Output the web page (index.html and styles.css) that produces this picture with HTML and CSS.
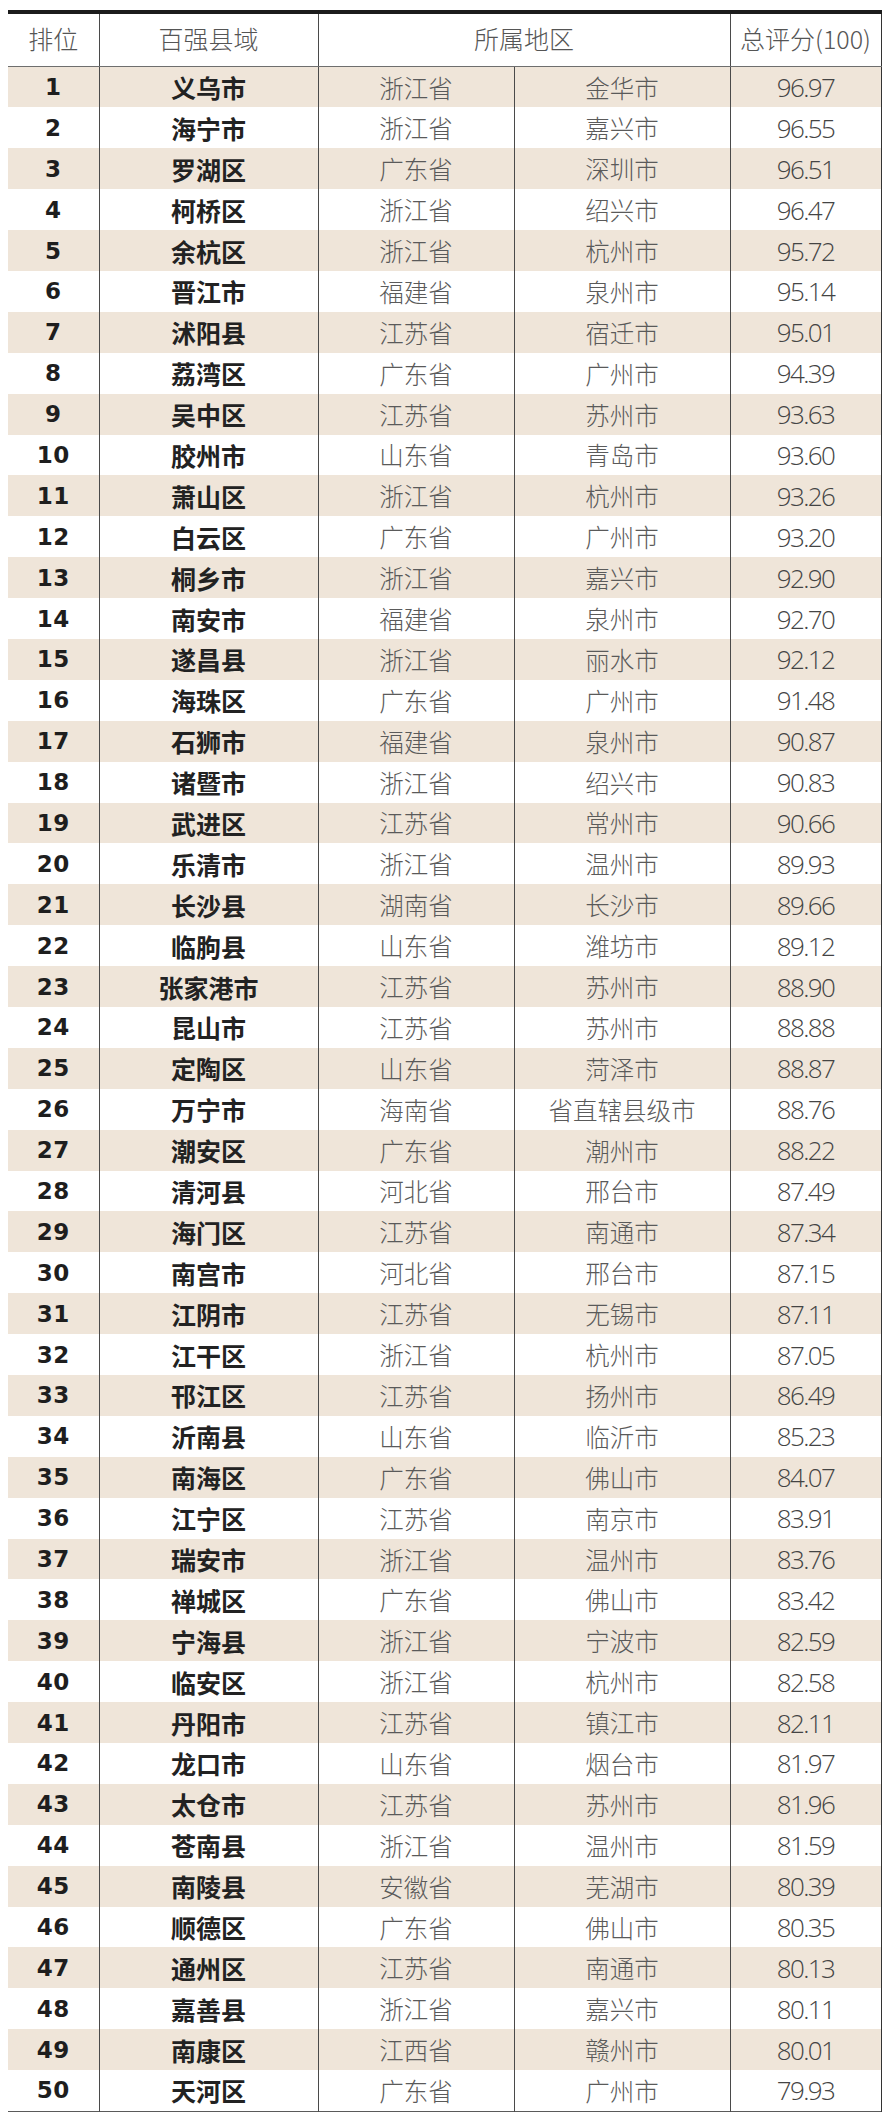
FILE: index.html
```html
<!DOCTYPE html>
<html lang="zh-CN">
<head>
<meta charset="utf-8">
<title>百强县域</title>
<link rel="stylesheet" href="styles.css">
</head>
<body>
<table class="rank">
<colgroup>
<col class="c-rank"><col class="c-name"><col class="c-prov"><col class="c-city"><col class="c-score">
</colgroup>
<thead>
<tr class="head"><th>排位</th><th>百强县域</th><th colspan="2">所属地区</th><th class="last">总评分(100)</th></tr>
</thead>
<tbody id="rows">
<tr><td class="n">1</td><td class="nm">义乌市</td><td class="pv">浙江省</td><td class="ct">金华市</td><td class="sc">96.97</td></tr>
<tr><td class="n">2</td><td class="nm">海宁市</td><td class="pv">浙江省</td><td class="ct">嘉兴市</td><td class="sc">96.55</td></tr>
<tr><td class="n">3</td><td class="nm">罗湖区</td><td class="pv">广东省</td><td class="ct">深圳市</td><td class="sc">96.51</td></tr>
<tr><td class="n">4</td><td class="nm">柯桥区</td><td class="pv">浙江省</td><td class="ct">绍兴市</td><td class="sc">96.47</td></tr>
<tr><td class="n">5</td><td class="nm">余杭区</td><td class="pv">浙江省</td><td class="ct">杭州市</td><td class="sc">95.72</td></tr>
<tr><td class="n">6</td><td class="nm">晋江市</td><td class="pv">福建省</td><td class="ct">泉州市</td><td class="sc">95.14</td></tr>
<tr><td class="n">7</td><td class="nm">沭阳县</td><td class="pv">江苏省</td><td class="ct">宿迁市</td><td class="sc">95.01</td></tr>
<tr><td class="n">8</td><td class="nm">荔湾区</td><td class="pv">广东省</td><td class="ct">广州市</td><td class="sc">94.39</td></tr>
<tr><td class="n">9</td><td class="nm">吴中区</td><td class="pv">江苏省</td><td class="ct">苏州市</td><td class="sc">93.63</td></tr>
<tr><td class="n">10</td><td class="nm">胶州市</td><td class="pv">山东省</td><td class="ct">青岛市</td><td class="sc">93.60</td></tr>
<tr><td class="n">11</td><td class="nm">萧山区</td><td class="pv">浙江省</td><td class="ct">杭州市</td><td class="sc">93.26</td></tr>
<tr><td class="n">12</td><td class="nm">白云区</td><td class="pv">广东省</td><td class="ct">广州市</td><td class="sc">93.20</td></tr>
<tr><td class="n">13</td><td class="nm">桐乡市</td><td class="pv">浙江省</td><td class="ct">嘉兴市</td><td class="sc">92.90</td></tr>
<tr><td class="n">14</td><td class="nm">南安市</td><td class="pv">福建省</td><td class="ct">泉州市</td><td class="sc">92.70</td></tr>
<tr><td class="n">15</td><td class="nm">遂昌县</td><td class="pv">浙江省</td><td class="ct">丽水市</td><td class="sc">92.12</td></tr>
<tr><td class="n">16</td><td class="nm">海珠区</td><td class="pv">广东省</td><td class="ct">广州市</td><td class="sc">91.48</td></tr>
<tr><td class="n">17</td><td class="nm">石狮市</td><td class="pv">福建省</td><td class="ct">泉州市</td><td class="sc">90.87</td></tr>
<tr><td class="n">18</td><td class="nm">诸暨市</td><td class="pv">浙江省</td><td class="ct">绍兴市</td><td class="sc">90.83</td></tr>
<tr><td class="n">19</td><td class="nm">武进区</td><td class="pv">江苏省</td><td class="ct">常州市</td><td class="sc">90.66</td></tr>
<tr><td class="n">20</td><td class="nm">乐清市</td><td class="pv">浙江省</td><td class="ct">温州市</td><td class="sc">89.93</td></tr>
<tr><td class="n">21</td><td class="nm">长沙县</td><td class="pv">湖南省</td><td class="ct">长沙市</td><td class="sc">89.66</td></tr>
<tr><td class="n">22</td><td class="nm">临朐县</td><td class="pv">山东省</td><td class="ct">潍坊市</td><td class="sc">89.12</td></tr>
<tr><td class="n">23</td><td class="nm">张家港市</td><td class="pv">江苏省</td><td class="ct">苏州市</td><td class="sc">88.90</td></tr>
<tr><td class="n">24</td><td class="nm">昆山市</td><td class="pv">江苏省</td><td class="ct">苏州市</td><td class="sc">88.88</td></tr>
<tr><td class="n">25</td><td class="nm">定陶区</td><td class="pv">山东省</td><td class="ct">菏泽市</td><td class="sc">88.87</td></tr>
<tr><td class="n">26</td><td class="nm">万宁市</td><td class="pv">海南省</td><td class="ct">省直辖县级市</td><td class="sc">88.76</td></tr>
<tr><td class="n">27</td><td class="nm">潮安区</td><td class="pv">广东省</td><td class="ct">潮州市</td><td class="sc">88.22</td></tr>
<tr><td class="n">28</td><td class="nm">清河县</td><td class="pv">河北省</td><td class="ct">邢台市</td><td class="sc">87.49</td></tr>
<tr><td class="n">29</td><td class="nm">海门区</td><td class="pv">江苏省</td><td class="ct">南通市</td><td class="sc">87.34</td></tr>
<tr><td class="n">30</td><td class="nm">南宫市</td><td class="pv">河北省</td><td class="ct">邢台市</td><td class="sc">87.15</td></tr>
<tr><td class="n">31</td><td class="nm">江阴市</td><td class="pv">江苏省</td><td class="ct">无锡市</td><td class="sc">87.11</td></tr>
<tr><td class="n">32</td><td class="nm">江干区</td><td class="pv">浙江省</td><td class="ct">杭州市</td><td class="sc">87.05</td></tr>
<tr><td class="n">33</td><td class="nm">邗江区</td><td class="pv">江苏省</td><td class="ct">扬州市</td><td class="sc">86.49</td></tr>
<tr><td class="n">34</td><td class="nm">沂南县</td><td class="pv">山东省</td><td class="ct">临沂市</td><td class="sc">85.23</td></tr>
<tr><td class="n">35</td><td class="nm">南海区</td><td class="pv">广东省</td><td class="ct">佛山市</td><td class="sc">84.07</td></tr>
<tr><td class="n">36</td><td class="nm">江宁区</td><td class="pv">江苏省</td><td class="ct">南京市</td><td class="sc">83.91</td></tr>
<tr><td class="n">37</td><td class="nm">瑞安市</td><td class="pv">浙江省</td><td class="ct">温州市</td><td class="sc">83.76</td></tr>
<tr><td class="n">38</td><td class="nm">禅城区</td><td class="pv">广东省</td><td class="ct">佛山市</td><td class="sc">83.42</td></tr>
<tr><td class="n">39</td><td class="nm">宁海县</td><td class="pv">浙江省</td><td class="ct">宁波市</td><td class="sc">82.59</td></tr>
<tr><td class="n">40</td><td class="nm">临安区</td><td class="pv">浙江省</td><td class="ct">杭州市</td><td class="sc">82.58</td></tr>
<tr><td class="n">41</td><td class="nm">丹阳市</td><td class="pv">江苏省</td><td class="ct">镇江市</td><td class="sc">82.11</td></tr>
<tr><td class="n">42</td><td class="nm">龙口市</td><td class="pv">山东省</td><td class="ct">烟台市</td><td class="sc">81.97</td></tr>
<tr><td class="n">43</td><td class="nm">太仓市</td><td class="pv">江苏省</td><td class="ct">苏州市</td><td class="sc">81.96</td></tr>
<tr><td class="n">44</td><td class="nm">苍南县</td><td class="pv">浙江省</td><td class="ct">温州市</td><td class="sc">81.59</td></tr>
<tr><td class="n">45</td><td class="nm">南陵县</td><td class="pv">安徽省</td><td class="ct">芜湖市</td><td class="sc">80.39</td></tr>
<tr><td class="n">46</td><td class="nm">顺德区</td><td class="pv">广东省</td><td class="ct">佛山市</td><td class="sc">80.35</td></tr>
<tr><td class="n">47</td><td class="nm">通州区</td><td class="pv">江苏省</td><td class="ct">南通市</td><td class="sc">80.13</td></tr>
<tr><td class="n">48</td><td class="nm">嘉善县</td><td class="pv">浙江省</td><td class="ct">嘉兴市</td><td class="sc">80.11</td></tr>
<tr><td class="n">49</td><td class="nm">南康区</td><td class="pv">江西省</td><td class="ct">赣州市</td><td class="sc">80.01</td></tr>
<tr><td class="n">50</td><td class="nm">天河区</td><td class="pv">广东省</td><td class="ct">广州市</td><td class="sc">79.93</td></tr>
</tbody>
</table>
</body>
</html>
```

FILE: styles.css
```css
html, body {
  margin: 0;
  padding: 0;
  background: #ffffff;
}

body {
  padding: 10px 0 0 8px;
  font-family: "Noto Sans CJK SC", "Noto Sans", sans-serif;
}

.rank {
  width: 873px;
  border-collapse: collapse;
  table-layout: fixed;
  border-top: 4px solid #1c1c1c;
  border-bottom: 1.5px solid #5a5a5a;
}

.c-rank { width: 91px; }
.c-name { width: 219px; }
.c-prov { width: 196px; }
.c-city { width: 216px; }
.c-score { width: 151px; }

.rank th,
.rank td {
  padding: 0;
  text-align: center;
  vertical-align: middle;
  white-space: nowrap;
  border-left: 1px solid #4a4a4a;
}

.rank th:first-child,
.rank td:first-child {
  border-left: none;
}

.rank th:last-child,
.rank td:last-child {
  border-right: 1.5px solid #333333;
}

.head th {
  height: 48px;
  font-weight: 300;
  font-size: 25px;
  color: #555555;
  border-bottom: 1.5px solid #6e6e6e;
  padding-bottom: 4px;
}

.rank tbody tr {
  height: 40.9px;
}

.rank tbody tr:nth-child(odd) {
  background: #efe5d9;
}

.n {
  font-family: "DejaVu Sans", sans-serif;
  font-weight: 700;
  font-size: 23px;
  color: #1e1e1e;
  letter-spacing: 0.5px;
}

.nm {
  font-weight: 700;
  font-size: 25px;
  color: #222222;
}

.pv,
.ct {
  font-weight: 300;
  font-size: 24.5px;
  color: #5a5a5a;
}

.sc {
  font-family: "Open Sans", "Noto Sans", sans-serif;
  font-weight: 300;
  font-size: 26px;
  letter-spacing: -1.6px;
  color: #444444;
}
```
